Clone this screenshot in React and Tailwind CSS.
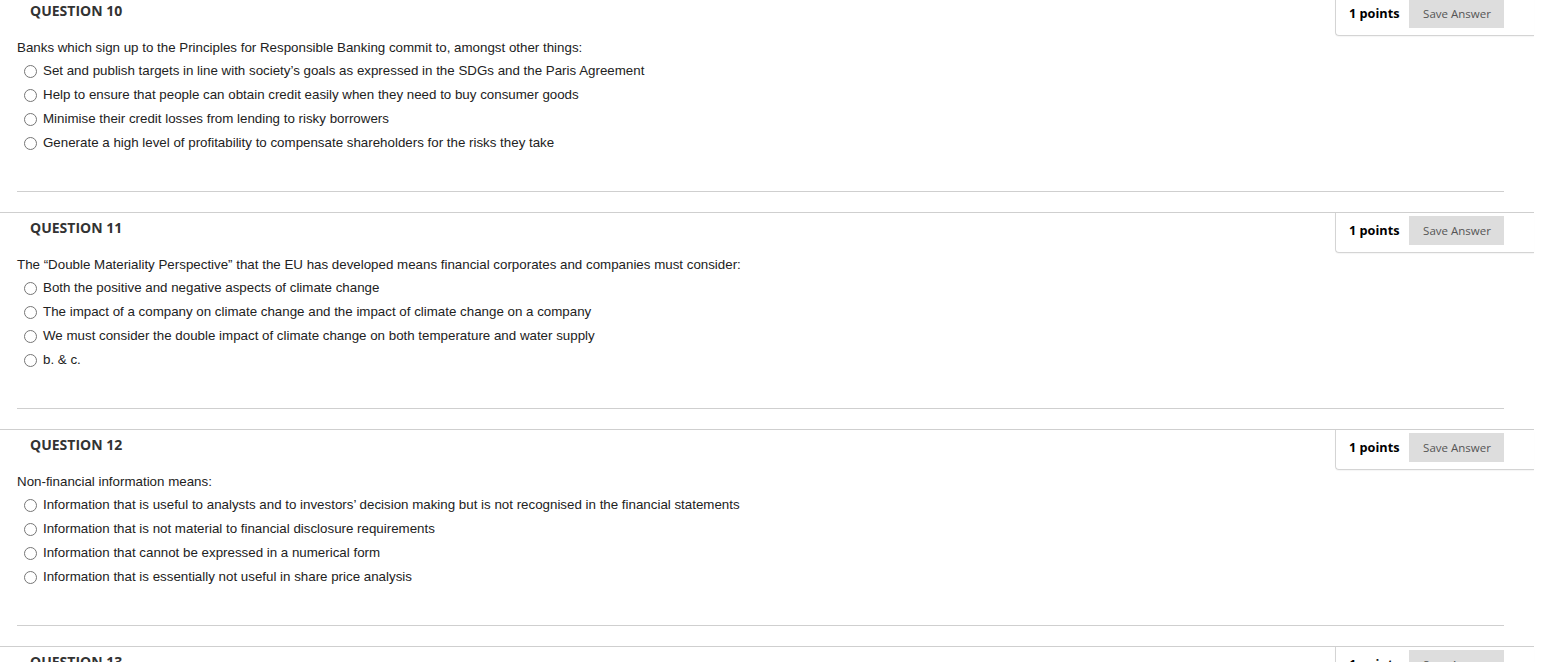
import React from 'react';

const QUESTIONS = [
  {
    n: 10,
    text: 'Banks which sign up to the Principles for Responsible Banking commit to, amongst other things:',
    options: [
      'Set and publish targets in line with society\u2019s goals as expressed in the SDGs and the Paris Agreement',
      'Help to ensure that people can obtain credit easily when they need to buy consumer goods',
      'Minimise their credit losses from lending to risky borrowers',
      'Generate a high level of profitability to compensate shareholders for the risks they take'
    ]
  },
  {
    n: 11,
    text: 'The \u201cDouble Materiality Perspective\u201d that the EU has developed means financial corporates and companies must consider:',
    options: [
      'Both the positive and negative aspects of climate change',
      'The impact of a company on climate change and the impact of climate change on a company',
      'We must consider the double impact of climate change on both temperature and water supply',
      'b. & c.'
    ]
  },
  {
    n: 12,
    text: 'Non-financial information means:',
    options: [
      'Information that is useful to analysts and to investors\u2019 decision making but is not recognised in the financial statements',
      'Information that is not material to financial disclosure requirements',
      'Information that cannot be expressed in a numerical form',
      'Information that is essentially not useful in share price analysis'
    ]
  },
  { n: 13, text: '', options: [] }
];

function Question({ q }) {
  return (
    <div className="h-[217px] border-t border-[#cfcfcf]">
      <div className="flex justify-between h-[40px]">
        <h3 className="pl-[30px] pt-[5px] text-[14px] leading-[20px] font-bold text-[#333] font-['Open_Sans',sans-serif]">
          QUESTION {q.n}
        </h3>
        <div className="w-[199px] h-[40px] border-l border-b border-[#d4d4d4] rounded-bl-[4px] shadow-[0_1px_1px_rgba(0,0,0,0.04)] flex items-start pt-[3px] pl-[13px]">
          <span className="mt-[6px] text-[12.7px] leading-[16px] font-bold text-black font-['Open_Sans',sans-serif]">1 points</span>
          <button className="ml-[10px] w-[95px] h-[29px] bg-[#dddddd] text-[11.5px] text-[#555] font-['Open_Sans',sans-serif]">
            Save Answer
          </button>
        </div>
      </div>
      <div className="pl-[17px] pr-[30px] font-['Liberation_Sans',Arial,sans-serif] text-[13.33px] text-[#222]">
        <p className="pt-[4px] leading-[16px]">{q.text}</p>
        <div className="mt-[3px]">
          {q.options.map((o) => (
            <label key={o} className="flex items-center h-[24px] pl-[7px]">
              <span className="w-[13px] h-[13px] rounded-full border border-[#767676] bg-white shrink-0" />
              <span className="ml-[6px] leading-[16px]">{o}</span>
            </label>
          ))}
        </div>
        {q.options.length > 0 && <div className="mt-[36px] border-t border-[#cfcfcf]" />}
      </div>
    </div>
  );
}

export default function App() {
  return (
    <div className="h-[662px] w-[1542px] overflow-hidden bg-white">
      <div className="w-[1534px] -mt-[5px]">
        {QUESTIONS.map((q) => (
          <Question key={q.n} q={q} />
        ))}
      </div>
    </div>
  );
}
